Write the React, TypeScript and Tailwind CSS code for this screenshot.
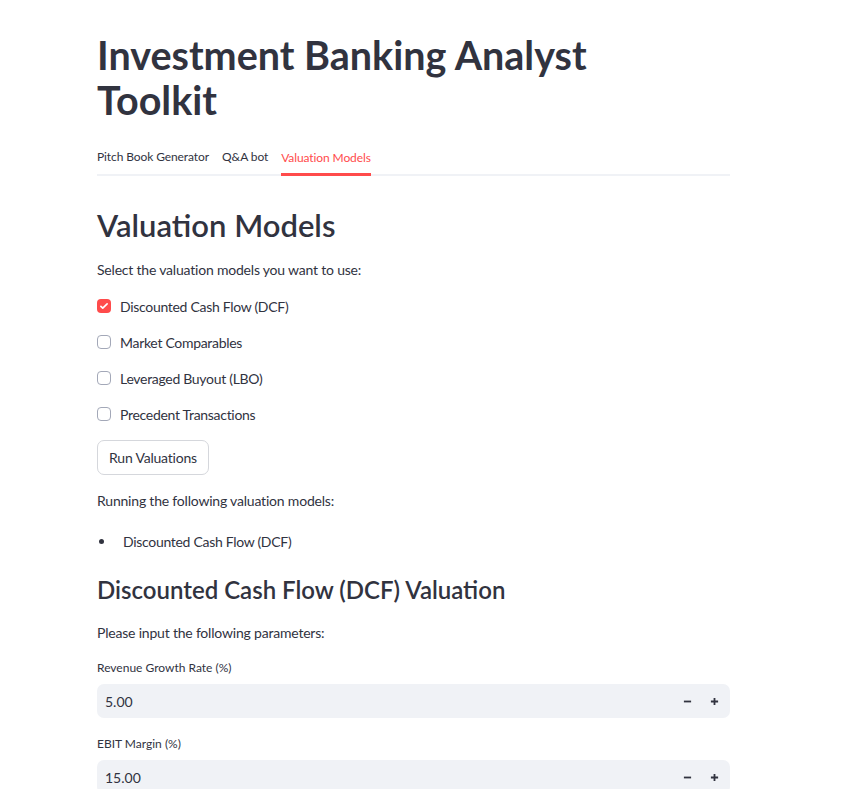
import { useState } from 'react'

const models = [
  'Discounted Cash Flow (DCF)',
  'Market Comparables',
  'Leveraged Buyout (LBO)',
  'Precedent Transactions',
]

function Checkbox({ label, checked, onToggle }: { label: string; checked: boolean; onToggle: () => void }) {
  return (
    <label className="flex h-[36px] cursor-pointer items-center gap-[9px]" onClick={onToggle}>
      {checked ? (
        <span className="flex h-[14px] w-[14px] items-center justify-center rounded-[4px] bg-[#ff4b4b]">
          <svg viewBox="0 0 16 16" className="h-[10px] w-[10px]" fill="none" stroke="white" strokeWidth="2.6" strokeLinecap="round" strokeLinejoin="round">
            <path d="M3 8.5l3 3 7-7" />
          </svg>
        </span>
      ) : (
        <span className="h-[14px] w-[14px] rounded-[4px] border border-[#a3a8b8] bg-white" />
      )}
      <span className="text-[14px] tracking-[-0.3px]">{label}</span>
    </label>
  )
}

function NumberInput({ label, value }: { label: string; value: string }) {
  return (
    <div className="flex flex-col">
      <div className="flex h-[20px] items-center text-[12px]">{label}</div>
      <div className="mt-[6px] flex h-[34px] items-center rounded-[7px] bg-[#f0f2f6] pl-[8px] pr-[2px]">
        <span className="flex-1 text-[14px]">{value}</span>
        <button className="flex h-full w-[27px] items-center justify-center">
          <svg viewBox="0 0 10 10" className="h-[9px] w-[9px]" stroke="#31333f" strokeWidth="2">
            <path d="M1 5h8" />
          </svg>
        </button>
        <button className="flex h-full w-[27px] items-center justify-center">
          <svg viewBox="0 0 10 10" className="h-[9px] w-[9px]" stroke="#31333f" strokeWidth="2">
            <path d="M1 5h8M5 1v8" />
          </svg>
        </button>
      </div>
    </div>
  )
}

export default function App() {
  const [selected, setSelected] = useState<boolean[]>([true, false, false, false])
  const tabs = ['Pitch Book Generator', 'Q&A bot', 'Valuation Models']

  return (
    <div className="min-h-screen bg-white font-['Lato','Liberation_Sans',sans-serif] text-[#31333f]">
      <div className="ml-[97px] w-[633px] pt-[32px]">
        {/* タイトル */}
        <h1 className="text-[39.5px] font-bold leading-[45px]">
          Investment Banking Analyst
          <br />
          Toolkit
        </h1>

        {/* タブ */}
        <div className="mt-[18px] flex gap-[13px] border-b-2 border-[#f0f2f6] tracking-[-0.1px]">
          {tabs.map((t, i) => (
            <div
              key={t}
              className={
                i === 2
                  ? '-mb-[2px] flex h-[36px] items-center border-b-[3px] border-[#ff4b4b] pt-[3px] text-[12px] text-[#ff4b4b]'
                  : 'flex h-[34px] items-center text-[12px]'
              }
            >
              {t}
            </div>
          ))}
        </div>

        <h2 className="mt-[30px] text-[31px] font-semibold leading-[38px]">Valuation Models</h2>
        <p className="mt-[16px] text-[14px] leading-[20px] tracking-[-0.2px]">Select the valuation models you want to use:</p>

        <div className="mt-[8px] flex flex-col">
          {models.map((m, i) => (
            <Checkbox
              key={m}
              label={m}
              checked={selected[i]}
              onToggle={() => setSelected((s) => s.map((v, j) => (j === i ? !v : v)))}
            />
          ))}
        </div>

        <button className="mt-[8px] h-[35px] rounded-[7px] border border-[#d5d7dc] px-[11px] text-[14px] tracking-[-0.2px]">
          Run Valuations
        </button>

        <p className="mt-[16px] text-[14px] leading-[20px] tracking-[-0.2px]">Running the following valuation models:</p>
        <div className="mt-[20px] flex h-[20px] items-center text-[14px] tracking-[-0.3px]">
          <span className="ml-[2px] h-[5px] w-[5px] rounded-full bg-[#31333f]" />
          <span className="ml-[19px]">Discounted Cash Flow (DCF)</span>
        </div>

        <h3 className="mt-[24px] text-[24px] font-semibold leading-[30px]">Discounted Cash Flow (DCF) Valuation</h3>
        <p className="mt-[18px] text-[14px] leading-[20px] tracking-[-0.2px]">Please input the following parameters:</p>

        <div className="mt-[15px] flex flex-col gap-[16px]">
          <NumberInput label="Revenue Growth Rate (%)" value="5.00" />
          <NumberInput label="EBIT Margin (%)" value="15.00" />
        </div>
      </div>
    </div>
  )
}
